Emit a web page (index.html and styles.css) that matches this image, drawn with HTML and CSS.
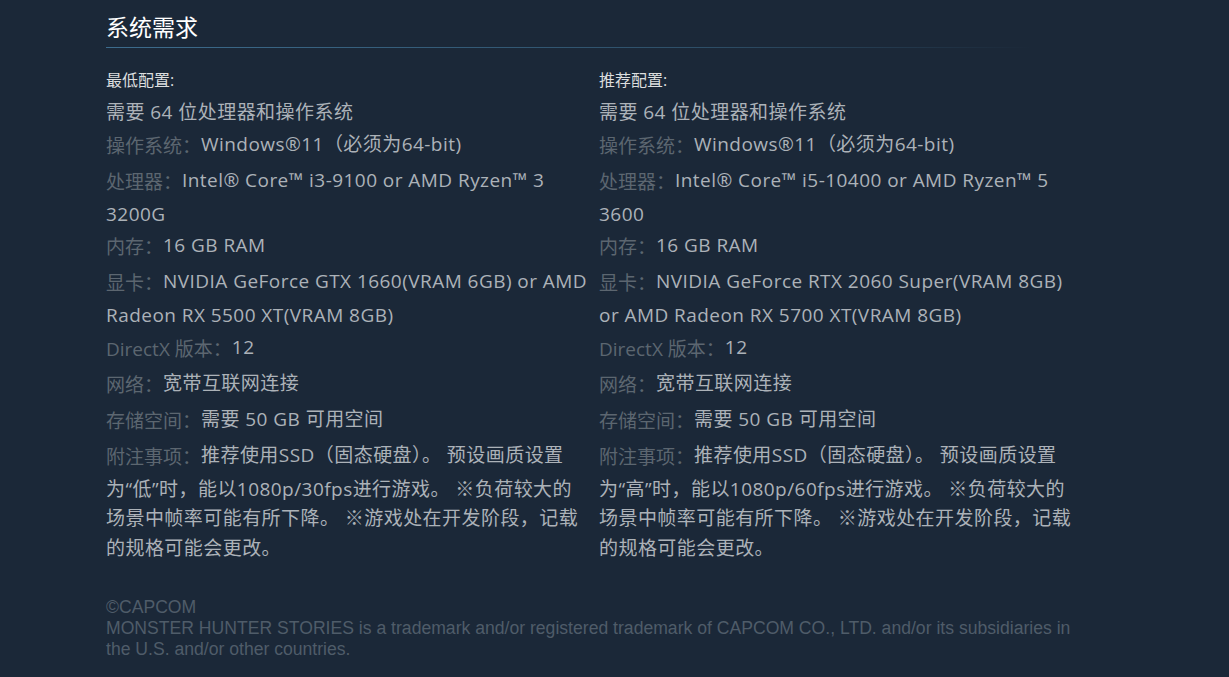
FILE: index.html
```html
<!DOCTYPE html>
<html lang="zh-CN">
<head>
<meta charset="utf-8">
<title>系统需求</title>
<link rel="stylesheet" href="styles.css">
</head>
<body>
<div class="page">
  <h2 class="title">系统需求</h2>
  <div class="sysreq">
    <div class="col">
      <div class="col-head">最低配置:</div>
      <ul class="reqs">
        <li>需要 64 位处理器和操作系统</li>
        <li><span class="lbl">操作系统：</span>Windows®11（必须为64-bit)</li>
        <li><span class="lbl">处理器：</span>Intel® Core™ i3-9100 or AMD Ryzen™ 3 3200G</li>
        <li><span class="lbl">内存：</span>16 GB RAM</li>
        <li><span class="lbl">显卡：</span>NVIDIA GeForce GTX 1660(VRAM 6GB) or AMD Radeon RX 5500 XT(VRAM 8GB)</li>
        <li><span class="lbl">DirectX 版本：</span>12</li>
        <li><span class="lbl">网络：</span>宽带互联网连接</li>
        <li><span class="lbl">存储空间：</span>需要 50 GB 可用空间</li>
        <li><span class="lbl">附注事项：</span>推荐使用SSD（固态硬盘）。 预设画质设置<span class="nb">为“低”时</span>，能以1080p/30fps进行游戏。 ※负荷较大的场景中帧率可能有所下降。 ※游戏处在开发阶段，记载的规格可能会更改。</li>
      </ul>
    </div>
    <div class="col">
      <div class="col-head">推荐配置:</div>
      <ul class="reqs">
        <li>需要 64 位处理器和操作系统</li>
        <li><span class="lbl">操作系统：</span>Windows®11（必须为64-bit)</li>
        <li><span class="lbl">处理器：</span>Intel® Core™ i5-10400 or AMD Ryzen™ 5 3600</li>
        <li><span class="lbl">内存：</span>16 GB RAM</li>
        <li><span class="lbl">显卡：</span>NVIDIA GeForce RTX 2060 Super(VRAM 8GB) or AMD Radeon RX 5700 XT(VRAM 8GB)</li>
        <li><span class="lbl">DirectX 版本：</span>12</li>
        <li><span class="lbl">网络：</span>宽带互联网连接</li>
        <li><span class="lbl">存储空间：</span>需要 50 GB 可用空间</li>
        <li><span class="lbl">附注事项：</span>推荐使用SSD（固态硬盘）。 预设画质设置<span class="nb">为“高”时</span>，能以1080p/60fps进行游戏。 ※负荷较大的场景中帧率可能有所下降。 ※游戏处在开发阶段，记载的规格可能会更改。</li>
      </ul>
    </div>
  </div>
  <div class="legal">
    ©CAPCOM<br>
    MONSTER HUNTER STORIES is a trademark and/or registered trademark of CAPCOM CO., LTD. and/or its subsidiaries in the U.S. and/or other countries.
  </div>
</div>
</body>
</html>
```
FILE: styles.css
```css
html, body {
  margin: 0;
  padding: 0;
  background: #1b2838;
}
body {
  font-family: "Open Sans", "Noto Sans CJK SC", sans-serif;
  color: #acb2b8;
}
.page {
  width: 986px;
  margin-left: 106px;
  padding-top: 12px;
}
.title {
  margin: 0;
  font-size: 23px;
  font-weight: 400;
  line-height: 30px;
  color: #ffffff;
  padding-bottom: 6px;
  background-image: linear-gradient(to right, #3d6c8d 0%, #2e4f68 60%, rgba(44, 75, 99, 0) 94%);
  background-size: 100% 1px;
  background-repeat: no-repeat;
  background-position: left bottom;
}
.sysreq {
  display: flex;
  margin-top: 22px;
}
.col {
  width: 493px;
  flex: none;
}
.col-head {
  font-size: 16px;
  line-height: 20px;
  color: #dcdedf;
}
.reqs {
  list-style: none;
  margin: 8px 0 0;
  padding: 0 11px 0 0;
  font-size: 19px;
  letter-spacing: 0.45px;
  line-height: 29.5px;
}
.reqs li {
  margin: 0;
}
.lbl {
  display: inline-block;
  vertical-align: middle;
  line-height: 36px;
  letter-spacing: 0;
  color: #5c6670;
}
.nb {
  white-space: nowrap;
}
.legal {
  margin-top: 34px;
  font-family: "Liberation Sans", Arial, sans-serif;
  font-size: 17.6px;
  line-height: 21px;
  color: #4f5c69;
  padding-bottom: 20px;
}
```
